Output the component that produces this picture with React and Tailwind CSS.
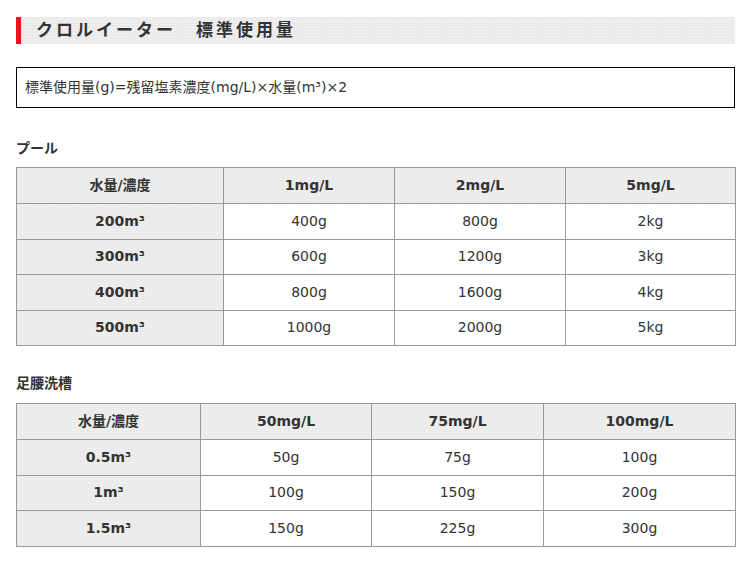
const font = { fontFamily: '"DejaVu Sans", "Noto Sans CJK JP", sans-serif' };

const pool = {
  head: ["水量/濃度", "1mg/L", "2mg/L", "5mg/L"],
  widths: ["w-[207px]", "w-[171px]", "w-[171px]", "w-[170px]"],
  rows: [
    ["200m³", "400g", "800g", "2kg"],
    ["300m³", "600g", "1200g", "3kg"],
    ["400m³", "800g", "1600g", "4kg"],
    ["500m³", "1000g", "2000g", "5kg"],
  ],
};

const foot = {
  head: ["水量/濃度", "50mg/L", "75mg/L", "100mg/L"],
  widths: ["w-[184px]", "w-[171px]", "w-[172px]", "w-[192px]"],
  rows: [
    ["0.5m³", "50g", "75g", "100g"],
    ["1m³", "100g", "150g", "200g"],
    ["1.5m³", "150g", "225g", "300g"],
  ],
};

const dots =
  "bg-[#ebebeb] bg-[radial-gradient(#f6f6f6_0.6px,transparent_0.7px)] bg-[length:3px_3px]";

function UsageTable({ data }) {
  return (
    <table className="w-[719px] border-collapse table-fixed text-[14px] text-[#333]">
      <colgroup>
        {data.widths.map((w, i) => (
          <col key={i} className={w} />
        ))}
      </colgroup>
      <thead>
        <tr>
          {data.head.map((h) => (
            <th
              key={h}
              className={`h-[36px] border border-[#999] font-bold text-center ${dots}`}
            >
              {h}
            </th>
          ))}
        </tr>
      </thead>
      <tbody>
        {data.rows.map((row) => (
          <tr key={row[0]}>
            {row.map((c, i) =>
              i === 0 ? (
                <th
                  key={i}
                  className={`h-[35.5px] border border-[#999] font-bold text-center ${dots}`}
                >
                  {c}
                </th>
              ) : (
                <td key={i} className="h-[35.5px] border border-[#999] text-center bg-white">
                  {c}
                </td>
              )
            )}
          </tr>
        ))}
      </tbody>
    </table>
  );
}

export default function App() {
  return (
    <div className="min-h-screen bg-white pt-[17px] pl-4 text-[#333]" style={font}>
      <div className={`w-[719px] h-[27px] flex items-center border-l-[5px] border-[#e8141e] pl-[15px] ${dots}`}>
        <h2 className="text-[17px] font-bold tracking-[3px] text-[#333]">
          クロルイーター　標準使用量
        </h2>
      </div>

      <div className="mt-[23px] w-[719px] h-[41px] border border-black flex items-center px-2 text-[14px]">
        標準使用量(g)=残留塩素濃度(mg/L)×水量(m³)×2
      </div>

      <h3 className="mt-[30px] mb-[9px] h-5 leading-5 text-[14px] font-bold">プール</h3>
      <UsageTable data={pool} />

      <h3 className="mt-[27px] mb-[10px] h-5 leading-5 text-[14px] font-bold">足腰洗槽</h3>
      <UsageTable data={foot} />
    </div>
  );
}
